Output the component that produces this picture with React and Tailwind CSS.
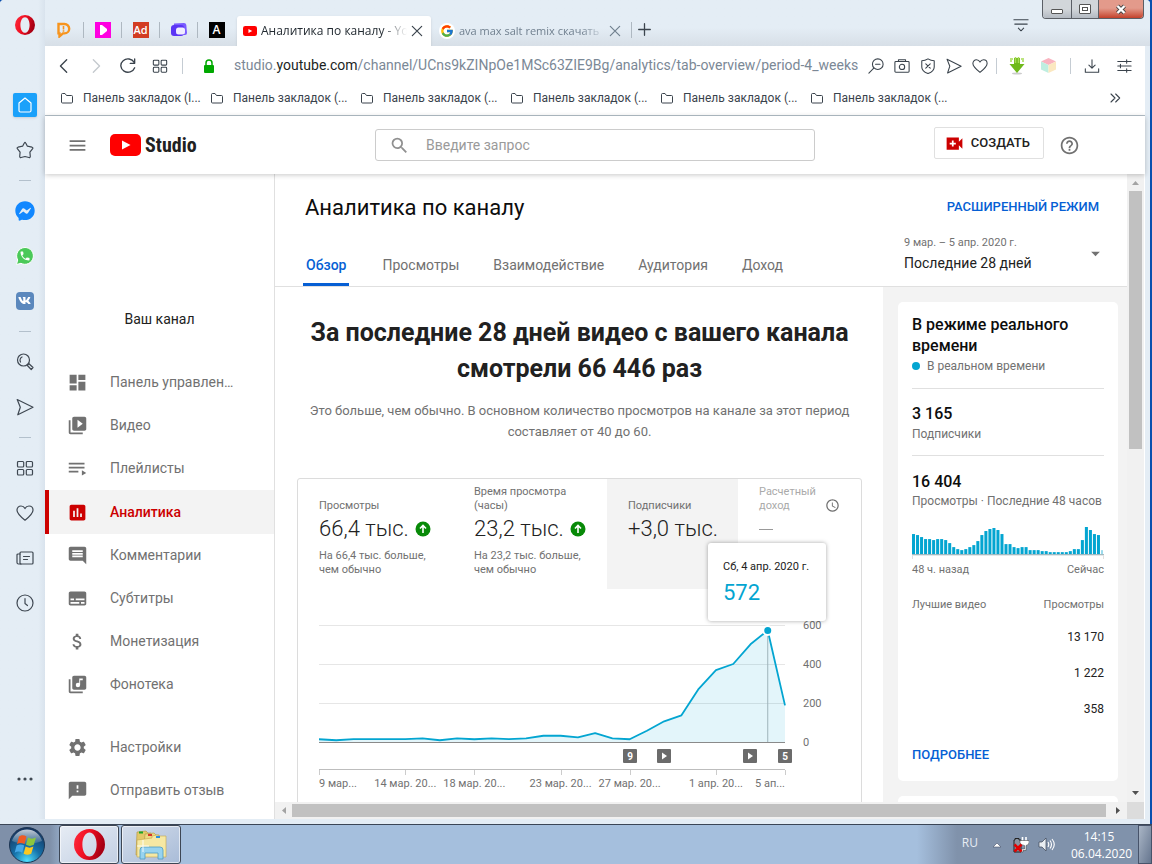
import React, { useState } from 'react';
import {
  MdAccessTime, MdArrowDropDown, MdAttachMoney, MdComment, MdDashboard, MdFeedback, MdHelpOutline,
  MdLibraryMusic, MdMenu, MdPoll, MdSearch, MdSettings, MdSubtitles, MdVideoCall,
  MdVideoLibrary, MdPhone,
} from 'react-icons/md';
import { FaFacebookMessenger, FaVk } from 'react-icons/fa';
import { FcGoogle } from 'react-icons/fc';

const PINNED = ['d', 'play', 'ad', 'cards', 'a'];
const BOOKMARKS = ['(I...', '(...', '(...', '(...', '(...', '(...'];

const MENU = [
  { icon: MdDashboard, label: 'Панель управлен…' },
  { icon: MdVideoLibrary, label: 'Видео' },
  { icon: PlaylistIcon, label: 'Плейлисты' },
  { icon: MdPoll, label: 'Аналитика', active: true },
  { icon: MdComment, label: 'Комментарии' },
  { icon: MdSubtitles, label: 'Субтитры' },
  { icon: MdAttachMoney, label: 'Монетизация' },
  { icon: MdLibraryMusic, label: 'Фонотека' },
];

const MENU_BOTTOM = [
  { icon: MdSettings, label: 'Настройки' },
  { icon: MdFeedback, label: 'Отправить отзыв' },
];

const TABS = ['Обзор', 'Просмотры', 'Взаимодействие', 'Аудитория', 'Доход'];

const SUBSCRIBERS = [
  14, 9, 15, 15, 15, 15, 19, 9, 19, 14, 19, 15, 19, 32, 32, 24, 45, 19, 14, 58, 106, 137, 273, 369, 400, 501, 572, 188,
];

const DATE_TICKS = [
  { day: 0, label: '9 мар...', anchor: 'start' },
  { day: 5, label: '14 мар. 20...', anchor: 'middle' },
  { day: 9, label: '18 мар. 20...', anchor: 'middle' },
  { day: 14, label: '23 мар. 20...', anchor: 'middle' },
  { day: 18, label: '27 мар. 20...', anchor: 'middle' },
  { day: 23, label: '1 апр. 20...', anchor: 'middle' },
  { day: 27, label: '5 ап...', anchor: 'end' },
];

const MARKERS = [
  { day: 18, text: '9' },
  { day: 20 },
  { day: 25 },
  { day: 27, text: '5' },
];

const HOURLY = [
  20, 19, 17, 15, 15, 14, 15, 15, 14, 11, 7, 5, 4, 5, 7, 9, 13, 19, 23, 25, 26, 24, 20, 10,
  10, 7, 6, 7, 7, 4, 4, 4, 3, 3, 2, 2, 2, 2, 2, 3, 5, 5, 14, 27, 24, 20, 19, 4,
];

const TOP_VIEWS = ['13 170', '1 222', '358'];

/* ---------- icons ---------- */

function Stroke({ size = 18, children, className = '' }) {
  return (
    <svg width={size} height={size} viewBox="0 0 18 18" fill="none" stroke="currentColor" strokeWidth="1.2" strokeLinecap="round" strokeLinejoin="round" className={`shrink-0 ${className}`}>
      {children}
    </svg>
  );
}

function PlaylistIcon({ size, className }) {
  return (
    <svg width={size} height={size} viewBox="0 0 24 24" fill="currentColor" className={className}>
      <path d="M2 5.500h18v2H2zM2 10h18v2H2zM2 14.700h11v2H2zM17 14l5 3l-5 3z" />
    </svg>
  );
}

function OperaLogo({ size, id }) {
  return (
    <svg width={size} height={size} viewBox="0 0 20 20" className="shrink-0">
      <defs>
        <linearGradient id={id} x1="0" y1="0" x2="1" y2="0.3">
          <stop offset="0" stopColor="#ff2b3d" />
          <stop offset="0.5" stopColor="#f01022" />
          <stop offset="1" stopColor="#a70014" />
        </linearGradient>
      </defs>
      <path fill={`url(#${id})`} fillRule="evenodd" d="M10 0a10 10 0 1 0 0 20a10 10 0 0 0 0-20zM10 2.200c2.700 0 4.600 3.400 4.600 7.800s-1.900 7.800-4.600 7.800s-4.600-3.400-4.600-7.800s1.900-7.800 4.600-7.800z" />
    </svg>
  );
}

function YouTubeMark({ width, height }) {
  return (
    <svg width={width} height={height} viewBox="0 0 31 22" className="shrink-0">
      <rect width="31" height="22" rx="5" fill="#f00" />
      <path d="M12 6.500v9l8.500-4.500z" fill="#fff" />
    </svg>
  );
}

function Grid({ size }) {
  return (
    <Stroke size={size}>
      <rect x="1.500" y="2.500" width="6.200" height="5.500" rx="1" />
      <rect x="10.300" y="2.500" width="6.200" height="5.500" rx="1" />
      <rect x="1.500" y="10.500" width="6.200" height="5.500" rx="1" />
      <rect x="10.300" y="10.500" width="6.200" height="5.500" rx="1" />
    </Stroke>
  );
}

function Heart({ size }) {
  return (
    <Stroke size={size}>
      <path d="M9 16.200C5 13 1 9.800 1 6.200C1 3.700 2.800 2 5 2c1.700 0 3.200 1 4 2.600C9.800 3 11.300 2 13 2c2.200 0 4 1.700 4 4.200c0 3.600-4 6.800-8 10z" />
    </Stroke>
  );
}

function Plane({ size }) {
  return (
    <Stroke size={size}>
      <path d="M1.200 1.500L17 9.200L1.800 16.800L4.300 9.200z" />
    </Stroke>
  );
}

function PinnedIcon({ kind }) {
  switch (kind) {
    case 'd':
      return (
        <svg width="16" height="16" viewBox="0 0 16 16" className="shrink-0">
          <path d="M2.500 2h6a4.700 4.700 0 0 1 0 9.400H7l-3.500 3v-3H2.500z" fill="none" stroke="#f7941d" strokeWidth="2.400" />
          <path d="M7.500 4v3.500M7.500 8.300v1.500" stroke="#f7941d" strokeWidth="1.600" />
        </svg>
      );
    case 'play':
      return (
        <svg width="16" height="16" viewBox="0 0 16 16">
          <rect width="16" height="16" fill="#ff00e1" />
          <path d="M5 3h2l5 4v2l-5 4H5z" fill="#fff" />
        </svg>
      );
    case 'ad':
      return <span className="w-4 h-4 bg-[#d23c22] text-white text-[11px] leading-4 font-semibold text-center">Ad</span>;
    case 'cards':
      return (
        <svg width="16" height="16" viewBox="0 0 16 16">
          <path d="M3 1.500l10-.5q2 0 2.300 2l.7 8q0 2-2 2H2z" fill="#7a5cff" />
          <rect x="0" y="3" width="13" height="11" rx="3" fill="#5b35f5" />
          <rect x="5" y="5.500" width="9" height="7" rx="2.500" fill="#f0ecff" />
        </svg>
      );
    default:
      return <span className="w-4 h-4 bg-black text-white text-[12px] leading-4 font-semibold text-center">A</span>;
  }
}

/* ---------- browser chrome ---------- */

function Rail() {
  const cell = 'h-[45px] w-full flex items-center justify-center shrink-0';
  const line = <div className="h-4 flex items-center shrink-0"><div className="w-3 h-px bg-[#b3c0cc]" /></div>;
  return (
    <aside className="w-[45px] shrink-0 bg-gradient-to-r from-[#e4edf5] from-85% to-[#d9e3ed] flex flex-col items-center text-[#3f4852] pb-[18px]">
      <div className="h-[82px] w-full pr-1 pt-[15px] flex justify-center shrink-0 pl-2">
        <button type="button" aria-label="Opera" className="h-5"><OperaLogo size={20} id="opera-rail" /></button>
      </div>
      <div className="flex flex-col items-center w-full pl-1 flex-1">
        <button type="button" aria-label="Экспресс-панель" className={cell}>
          <span className="w-6 h-6 bg-[#1ba1fa] rounded-[2px] shadow-sm flex items-center justify-center text-white">
            <Stroke size={18}><path d="M9 2L15 7v7.500a1.500 1.500 0 0 1-1.500 1.500h-9A1.500 1.500 0 0 1 3 14.500V7z" /></Stroke>
          </span>
        </button>
        <button type="button" aria-label="Закладки" className={cell}>
          <Stroke size={18}><path d="M8.300 2q.7-1.400 1.400 0l1.700 3.200l4.600 1q1.500.5.500 1.600l-2.600 3.300l.4 4.400q-.2 1.300-1.400 1L9 15.500l-3.900 1q-1.200.3-1.400-1l.4-4.400L1.500 7.800q-1-1.100.5-1.600l4.600-1z" /></Stroke>
        </button>
        {line}
        <button type="button" aria-label="Messenger" className={cell}><FaFacebookMessenger size={20} className="text-[#1288ff]" /></button>
        <button type="button" aria-label="WhatsApp" className={cell}>
          <svg width="18" height="18" viewBox="0 0 18 18">
            <path d="M9 .5a8.400 8.400 0 1 1-4 15.800L.5 17.500L1.700 13A8.400 8.400 0 0 1 9 .5z" fill="#4ac959" stroke="#fff" />
            <MdPhone x="3" y="3" size={12} color="#fff" />
          </svg>
        </button>
        <button type="button" aria-label="ВКонтакте" className={cell}>
          <span className="w-[18px] h-[18px] rounded bg-[#5b88bd] flex items-center justify-center"><FaVk size={13} className="text-white" /></span>
        </button>
        {line}
        <button type="button" aria-label="Поиск" className={cell}>
          <Stroke size={18}>
            <circle cx="7.500" cy="7" r="6" />
            <path d="M12 11.500l1-.8l4 3.800l-1.800 2l-3.800-4zM4.500 9A3.600 3.600 0 0 1 6 4" />
          </Stroke>
        </button>
        <button type="button" aria-label="Моя лента" className={cell}><Plane size={18} /></button>
        {line}
        <button type="button" aria-label="Вкладки" className={cell}><Grid size={18} /></button>
        <button type="button" aria-label="Избранное" className={cell}><Heart size={18} /></button>
        <button type="button" aria-label="Новости" className={cell}>
          <Stroke size={18}>
            <rect x="4" y="3" width="13" height="12" rx="1" />
            <path d="M4 5H2a1 1 0 0 0-1 1v7.500A1.500 1.500 0 0 0 2.500 15H5M7.500 7.500h6M7.500 10.500h4" />
          </Stroke>
        </button>
        <button type="button" aria-label="История" className={cell}>
          <Stroke size={18}><circle cx="9" cy="9" r="8" /><path d="M9 4.500V9.500l2.500 2" /></Stroke>
        </button>
        <button type="button" aria-label="Ещё" className={`${cell} mt-auto`}>
          <svg width="16" height="4" viewBox="0 0 16 4" fill="currentColor"><circle cx="2" cy="2" r="1.600" /><circle cx="8" cy="2" r="1.600" /><circle cx="14" cy="2" r="1.600" /></svg>
        </button>
      </div>
    </aside>
  );
}

function Cross({ className }) {
  return <Stroke size={12} className={className}><path d="M2 2l14 14M16 2L2 16" strokeWidth="1.800" /></Stroke>;
}

function TabStrip() {
  return (
    <div className="h-[46px] shrink-0 bg-gradient-to-b from-[#e4edf5] from-60% to-[#d7dfe7] flex items-start text-[12px] text-[#3b444d]">
      <div className="flex items-center h-[30px] mt-[15px] ml-[10px]">
        {PINNED.map((kind, i) => (
          <React.Fragment key={kind}>
            {i > 0 && <span className="w-px h-4 bg-[#aeb8c1]" />}
            <button type="button" aria-label={kind} className={`flex justify-center ${i === 0 ? 'w-7 pr-2.5' : 'w-[37px]'}`}><PinnedIcon kind={kind} /></button>
          </React.Fragment>
        ))}
      </div>
      <div className="w-[194px] h-[30px] mt-4 ml-[2px] bg-white rounded-t-[3px] shadow-sm flex items-center pl-1.5 pr-2 gap-1">
        <YouTubeMark width={14} height={10} />
        <span className="flex-1 min-w-0 whitespace-nowrap text-[#222a31] [mask-image:linear-gradient(to_right,#000_82%,transparent)]">Аналитика по каналу - Yo</span>
        <button type="button" aria-label="Закрыть вкладку"><Cross /></button>
      </div>
      <div className="w-[200px] h-[30px] mt-4 flex items-center pl-2 pr-2.5 gap-1 text-[#71808f]">
        <span className="w-4 h-4 rounded-full bg-white flex items-center justify-center shrink-0"><FcGoogle size={14} /></span>
        <span className="flex-1 min-w-0 whitespace-nowrap text-[11px] [mask-image:linear-gradient(to_right,#000_84%,transparent)]">ava max salt remix скачать</span>
        <button type="button" aria-label="Закрыть вкладку"><Cross /></button>
      </div>
      <span className="w-px h-4 bg-[#aeb8c1] mt-[22px]" />
      <button type="button" aria-label="Новая вкладка" className="mt-[23px] ml-1.5">
        <Stroke size={13}><path d="M9 1v16M1 9h16" strokeWidth="1.800" /></Stroke>
      </button>
      <button type="button" aria-label="Меню вкладок" className="ml-auto mt-[17px] mr-[13px]">
        <Stroke size={16}><path d="M1 3h16M2 8h14M6 12.500l3 3l3-3" /></Stroke>
      </button>
      <div className="flex h-[19px] mr-1.5 border border-t-0 border-[#5b5f66] rounded-b-[4px] overflow-hidden">
        <button type="button" aria-label="Свернуть" className="w-7 bg-gradient-to-b from-[#d2d6da] from-50% to-[#b4bac2] flex items-center justify-center pt-1">
          <span className="w-3 h-[5px] border border-[#555] bg-white rounded-[1px]" />
        </button>
        <button type="button" aria-label="Развернуть" className="w-[27px] border-l border-[#5b5f66] bg-gradient-to-b from-[#d2d6da] from-50% to-[#b4bac2] flex items-center justify-center">
          <span className="w-3 h-[10px] border border-[#555] bg-white rounded-[1px] flex items-center justify-center"><span className="w-1.5 h-1 border border-[#555]" /></span>
        </button>
        <button type="button" aria-label="Закрыть" className="w-[45px] border-l border-[#5b5f66] bg-gradient-to-b from-[#e39a8b] from-45% to-[#c3402a] flex items-center justify-center">
          <svg width="12" height="11" viewBox="0 0 12 11"><path d="M2.500 2l7 7M9.500 2l-7 7" stroke="#444" strokeWidth="4" /><path d="M2.500 2l7 7M9.500 2l-7 7" stroke="#fff" strokeWidth="2.400" /></svg>
        </button>
      </div>
    </div>
  );
}

function AddressBar() {
  const rule = <span className="w-px h-4 bg-[#c5ccd3]" />;
  return (
    <div className="h-[39px] shrink-0 bg-white flex items-center text-[#3a434c] pl-[11px] pr-[13px]">
      <button type="button" aria-label="Назад" className="w-4 mr-4"><Stroke size={16}><path d="M12 2L5 9l7 7" strokeWidth="1.500" /></Stroke></button>
      <button type="button" aria-label="Вперёд" className="w-4 mr-4 text-[#c4c9ce]"><Stroke size={16}><path d="M6 2l7 7l-7 7" strokeWidth="1.500" /></Stroke></button>
      <button type="button" aria-label="Обновить" className="w-4 mr-4"><Stroke size={16}><path d="M16 5A8 7.500 0 1 0 16.500 11M16.500 1v5h-5" strokeWidth="1.500" /></Stroke></button>
      <button type="button" aria-label="Экспресс-панель" className="w-4 mr-[14px]"><Grid size={16} /></button>
      {rule}
      <svg width="12" height="14" viewBox="0 0 12 14" className="ml-[20px] mr-[19px] shrink-0">
        <path d="M3 6V4a3 3 0 0 1 6 0v2" fill="none" stroke="#00a800" strokeWidth="1.500" />
        <rect x="1" y="6" width="10" height="8" rx="1" fill="#00a800" />
      </svg>
      <div className="flex-1 min-w-0 whitespace-nowrap font-[Roboto,sans-serif] text-[14px] text-[#7b8896]">
        studio.<span className="text-[#1b1f23]">youtube.com</span>/channel/UCns9kZINpOe1MSc63ZIE9Bg/analytics/tab-overview/period-4_weeks
      </div>
      <div className="flex items-center gap-2.5 ml-2">
        <button type="button" aria-label="Масштаб"><Stroke size={16}><circle cx="11" cy="7" r="6" /><path d="M6.500 11.500L1 17M8.500 7h5" /></Stroke></button>
        <button type="button" aria-label="Снимок"><Stroke size={16}><rect x="1" y="4" width="16" height="12" rx="1" /><path d="M5 4V2h8v2" /><circle cx="9" cy="10" r="3" /></Stroke></button>
        <button type="button" aria-label="Блокировка рекламы"><Stroke size={16}><path d="M9 1c2.500 1.500 5 2 7 2v7c0 3.500-3 6-7 7.500C5 16 2 13.500 2 10V3c2 0 4.500-.5 7-2zM6.500 6.500l5 5M11.500 6.500l-5 5" /></Stroke></button>
        <button type="button" aria-label="Отправить"><Plane size={16} /></button>
        <button type="button" aria-label="Избранное"><Heart size={16} /></button>
      </div>
      <div className="flex items-center ml-2">
        {rule}
        <button type="button" aria-label="Загрузчик" className="ml-3 mr-4">
          <svg width="16" height="18" viewBox="0 0 16 18">
            <ellipse cx="8" cy="16.500" rx="5" ry="1" fill="#ccc" />
            <path d="M5 1h6v6h4.500L8 16L.5 7H5z" fill="#6fb91b" />
            <path d="M1 2h3M12 2h3M1 4h2M13 4h2M6.500 0v6M9.500 0v6" stroke="#a7dc56" strokeWidth="1.500" />
          </svg>
        </button>
        <button type="button" aria-label="Расширение">
          <svg width="15" height="15" viewBox="0 0 15 15"><path d="M7.500 0L15 3.500L7.500 7L0 3.500z" fill="#f9b4c0" /><path d="M0 3.500L7.500 7v8L0 11.500z" fill="#bfeee0" /><path d="M15 3.500L7.500 7v8l7.500-3.500z" fill="#fbe8c0" /></svg>
        </button>
        <span className="w-px h-4 bg-[#c5ccd3] ml-[14px] mr-[13px]" />
        <button type="button" aria-label="Загрузки" className="mr-4"><Stroke size={16}><path d="M9 2v9M5.500 8L9 11.500L12.500 8M1.500 12v4h15v-4" /></Stroke></button>
        <button type="button" aria-label="Настройки"><Stroke size={16}><path d="M2 4h15M2 9h15M2 14h15M12 2v4M5 7v4M12 12v4" /></Stroke></button>
      </div>
    </div>
  );
}

function BookmarkBar() {
  return (
    <div className="h-[31px] shrink-0 bg-white border-b border-[#b4c0c9] flex items-center font-[Roboto,sans-serif] text-[12px] text-[#3a434c] pl-4 pr-[24px] pb-1">
      {BOOKMARKS.map((tail, i) => (
        <a key={i} href="#" className="w-[150px] flex items-center gap-[10px] whitespace-nowrap">
          <svg width="12" height="11" viewBox="0 0 12 11" fill="none" stroke="currentColor" className="shrink-0"><path d="M.5 1.500a1 1 0 0 1 1-1h2.500l1.500 2h5a1 1 0 0 1 1 1v5.500a1 1 0 0 1-1 1h-9a1 1 0 0 1-1-1z" /></svg>
          Панель закладок {tail}
        </a>
      ))}
      <button type="button" aria-label="Другие закладки" className="ml-auto"><Stroke size={12}><path d="M3 3l6 6l-6 6M10 3l6 6l-6 6" strokeWidth="1.600" /></Stroke></button>
    </div>
  );
}

/* ---------- studio page ---------- */

function StudioHeader() {
  return (
    <header className="h-[58px] shrink-0 bg-white flex items-center shadow-[0_1px_5px_rgba(0,0,0,0.22)] relative z-10">
      <button type="button" aria-label="Меню" className="ml-[22px] text-[#717171]"><MdMenu size={21} /></button>
      <a href="#" className="ml-[22px] flex items-center gap-1 w-[265px]">
        <YouTubeMark width={31} height={22} />
        <span className="font-['Roboto_Condensed','Liberation_Sans_Narrow',Roboto,sans-serif] font-bold text-[20px] leading-6 text-[#212121]">Studio</span>
      </a>
      <label className="flex-1 max-w-[440px] h-8 border border-[#ccc] rounded-[3px] flex items-center">
        <MdSearch size={21} className="ml-[13px] mr-4 text-[#909090] shrink-0" />
        <input type="text" aria-label="Поиск" placeholder="Введите запрос" className="flex-1 min-w-0 text-[14px] outline-none placeholder:text-[#9a9a9a]" />
      </label>
      <button type="button" className="ml-auto h-8 mb-1 border border-[#e0e0e0] rounded-[2px] flex items-center gap-1.5 pl-[9px] pr-[13px] text-[13px] font-medium text-[#212121]">
        <svg width="21" height="21" viewBox="0 0 24 24"><path d="M3 5h14v5l4-4v12l-4-4v5H3z" fill="#c00" /><path d="M10 8.500v7M6.500 12h7" stroke="#fff" strokeWidth="2" /></svg>
        СОЗДАТЬ
      </button>
      <button type="button" aria-label="Справка" className="ml-[15px] mr-[65px] text-[#717171]"><MdHelpOutline size={21} /></button>
    </header>
  );
}

function MenuItem({ icon: Icon, label, active }) {
  return (
    <a
      href="#"
      className={`flex items-center text-[14px] ${
        active ? 'h-11 bg-[#f3f3f3] text-[#c00] border-l-4 border-[#c00] pl-[18px] font-medium' : 'h-[43px] text-[#717171] pl-[22px]'
      }`}
    >
      <Icon size={21} className="shrink-0" />
      <span className="ml-[22px] whitespace-nowrap">{label}</span>
    </a>
  );
}

function StudioSidebar() {
  return (
    <nav className="w-[230px] shrink-0 bg-white border-r border-[#e0e0e0]">
      <div className="h-[187px] flex flex-col justify-end items-center pb-8">
        <p className="text-[14px] leading-5 text-[#212121]">Ваш канал</p>
      </div>
      {MENU.map((item) => <MenuItem key={item.label} {...item} />)}
      <div className="h-5" />
      {MENU_BOTTOM.map((item) => <MenuItem key={item.label} {...item} />)}
    </nav>
  );
}

function PageTop({ tab, setTab }) {
  return (
    <div className="h-[113px] shrink-0 bg-white border-b border-[#e0e0e0] flex justify-between pl-7 pr-7">
      <div className="flex flex-col justify-between">
        <h1 className="mt-[19px] ml-[2px] text-[22px] leading-[30px] text-[#0d0d0d]">Аналитика по каналу</h1>
        <div className="flex gap-[31px]" role="tablist">
          {TABS.map((name) => (
            <button
              key={name}
              type="button"
              role="tab"
              aria-selected={tab === name}
              onClick={() => setTab(name)}
              className={`h-10 pt-[2px] pl-[3px] text-[14px] border-b-[3px] ${
                tab === name ? 'text-[#065fd4] border-[#065fd4] font-medium pr-[2px]' : 'text-[#717171] border-transparent'
              }`}
            >
              {name}
            </button>
          ))}
        </div>
      </div>
      <div className="w-[195px] flex flex-col">
        <a href="#" className="mt-[23px] self-end whitespace-nowrap text-[13px] leading-5 font-medium text-[#065fd4]">РАСШИРЕННЫЙ РЕЖИМ</a>
        <button type="button" className="mt-4 flex items-center justify-between text-left">
          <span>
            <span className="block text-[11px] leading-5 text-[#717171]">9 мар. – 5 апр. 2020 г.</span>
            <span className="block text-[14px] leading-5 text-[#212121]">Последние 28 дней</span>
          </span>
          <MdArrowDropDown size={21} className="text-[#717171] -mr-[7px]" />
        </button>
      </div>
    </div>
  );
}

function Metric({ label, value, note, up, selected, estimated }) {
  return (
    <button type="button" className={`min-w-0 h-[110px] pl-[21px] pr-2 flex flex-col justify-start text-left ${selected ? 'bg-[#f3f3f3]' : ''}`}>
      <span className="flex items-end w-full pt-[6px]">
        <span className={`h-[28px] flex items-end text-[11px] leading-[14px] ${estimated ? 'text-[#aaa] w-[66px]' : 'text-[#717171] w-[100px]'}`}>{label}</span>
        {estimated && <MdAccessTime size={15} className="text-[#717171] shrink-0" />}
      </span>
      <span className={`h-8 flex items-center gap-[6px] text-[22px] leading-8 font-light whitespace-nowrap ${estimated ? 'text-[#aaa]' : 'text-[#212121]'}`}>
        {estimated ? <span className="w-[14px] h-px bg-[#999]" /> : value}
        {up && (
          <svg width="16" height="16" viewBox="0 0 16 16" className="shrink-0"><circle cx="8" cy="8" r="7.500" fill="#088a08" /><path d="M8 12V5M5 7.500L8 4.500l3 3" fill="none" stroke="#fff" strokeWidth="1.600" /></svg>
        )}
      </span>
      <span className="mt-1 w-[120px] text-[11px] leading-[14px] text-[#717171]">{note}</span>
    </button>
  );
}

// 466px plot, 39px for every 200 subscribers
const px = (day) => 21 + (day * 466) / 27;
const py = (value) => 153 - (value * 39) / 200;

function Chart() {
  const line = SUBSCRIBERS.map((v, i) => `${px(i)},${py(v)}`).join(' ');
  return (
    <svg viewBox="0 0 563 214" className="w-full h-auto block" role="img" aria-label="Подписчики">
      {[200, 400, 600].map((v) => <path key={v} d={`M21 ${py(v) + 0.5}H487`} stroke="#e6e6e6" />)}
      <polygon points={`21,153 ${line} 487,153`} fill="#00a5d1" fillOpacity="0.11" />
      <path d="M21 153.500H487" stroke="#8a8a8a" />
      <path d={`M${px(26)} 41V153`} stroke="#9fb3ba" />
      <polyline points={line} fill="none" stroke="#03a5d1" strokeWidth="1.800" strokeLinejoin="round" />
      <circle cx={px(26)} cy={py(572)} r="4.500" fill="#03a5d1" stroke="#fff" strokeWidth="2" />
      {[0, 200, 400, 600].map((v) => <text key={v} x="505" y={py(v) + 4} fontSize="11" fill="#717171">{v}</text>)}
      {MARKERS.map(({ day, text }) => (
        <g key={day} transform={`translate(${Math.round(px(day)) - 7} 160)`}>
          <rect width="14" height="14" rx="1" fill="#6b6b6b" />
          {text ? <text x="7" y="11" fontSize="10" fontWeight="700" fill="#fff" textAnchor="middle">{text}</text> : <path d="M5 3.500v7l5-3.500z" fill="#fff" />}
        </g>
      ))}
      <path d="M21 180.500H487" stroke="#bdbdbd" />
      {DATE_TICKS.map(({ day, label, anchor }) => (
        <g key={day}>
          <path d={`M${Math.round(px(day)) + 0.5} 181v5`} stroke="#ccc" />
          <text x={px(day)} y="198" fontSize="11" fill="#717171" textAnchor={anchor}>{label}</text>
        </g>
      ))}
    </svg>
  );
}

function Overview() {
  return (
    <main className="flex-1 min-w-0 bg-white pl-[22px] pr-[21px] pt-7">
      <h2 className="text-[25px] leading-9 font-bold text-[#212121] text-center">За последние 28 дней видео с вашего канала смотрели 66 446 раз</h2>
      <p className="mt-[13px] text-[13px] leading-[21px] text-[#717171] text-center">
        Это больше, чем обычно. В основном количество просмотров на канале за этот период составляет от 40 до 60.
      </p>
      <section className="relative mt-[36px] h-[360px] border border-[#dcdcdc] rounded-[3px]">
        <div className="grid grid-cols-[155fr_154fr_131fr_123fr]">
          <Metric label="Просмотры" value="66,4 тыс." up note="На 66,4 тыс. больше, чем обычно" />
          <Metric label="Время просмотра (часы)" value="23,2 тыс." up note="На 23,2 тыс. больше, чем обычно" />
          <Metric label="Подписчики" value="+3,0 тыс." selected />
          <Metric label="Расчетный доход" estimated />
        </div>
        <Chart />
        <div className="absolute right-[35px] top-[64px] w-[118px] h-[78px] bg-white rounded-[3px] shadow-[0_0_4px_rgba(0,0,0,0.35)] pl-[15px] pt-4">
          <p className="text-[11px] leading-4 text-[#212121]">Сб, 4 апр. 2020 г.</p>
          <p className="mt-1 text-[22px] leading-7 text-[#03a5d1]">572</p>
        </div>
      </section>
    </main>
  );
}

function Realtime() {
  return (
    <aside className="w-[244px] shrink-0 bg-[#f3f3f3] pl-[15px] pr-[9px] pt-[15px]">
      <section className="h-[479px] bg-white rounded-[5px] px-[14px] pt-3 text-[#717171] text-[12px]">
        <h3 className="text-[16px] leading-[21px] font-medium text-[#0d0d0d]">В режиме реального времени</h3>
        <p className="flex items-center gap-[7px] leading-5 h-5"><span className="w-2 h-2 rounded-full bg-[#03a5d1]" />В реальном времени</p>
        <div className="mt-3 border-t border-[#e0e0e0] pt-[15px] h-[67px]">
          <p className="text-[16px] leading-5 font-medium text-[#0d0d0d]">3 165</p>
          <p className="leading-5">Подписчики</p>
        </div>
        <div className="border-t border-[#e0e0e0] pt-4">
          <p className="text-[16px] leading-5 font-medium text-[#0d0d0d]">16 404</p>
          <p className="leading-[19px] whitespace-nowrap">Просмотры · Последние 48 часов</p>
        </div>
        <svg viewBox="0 0 191 34" className="mt-[14px] w-full h-auto block" role="img" aria-label="Просмотры за 48 часов">
          {HOURLY.map((h, i) => <rect key={i} x={i * 4} y={29 - h} width={i === 47 ? 2 : 3} height={h} fill="#03a5d1" fillOpacity={i === 47 ? 0.4 : 1} />)}
          <path d="M0 29.500H191" stroke="#8aa5ad" />
          <path d="M.5 30v4M190.500 30v4" stroke="#e0e0e0" />
        </svg>
        <div className="flex justify-between text-[11px] leading-5 mt-px"><span>48 ч. назад</span><span>Сейчас</span></div>
        <table className="w-full mt-[15px]">
          <thead>
            <tr className="text-[11px] leading-5">
              <th className="font-normal text-left">Лучшие видео</th>
              <th className="font-normal text-right">Просмотры</th>
            </tr>
          </thead>
          <tbody>
            {TOP_VIEWS.map((views, i) => (
              <tr key={views} className={i === 0 ? 'h-10' : 'h-9'}>
                <td />
                <td className={`text-right text-[#212121] ${i === 0 ? 'pt-1' : ''}`}>{views}</td>
              </tr>
            ))}
          </tbody>
        </table>
        <a href="#" className="inline-block mt-[18px] text-[13px] leading-5 font-medium text-[#065fd4]">ПОДРОБНЕЕ</a>
      </section>
      <section className="mt-[15px] h-10 bg-white rounded-[5px]" />
    </aside>
  );
}

function Arrow({ d, color }) {
  return <svg width="17" height="17" viewBox="0 0 17 17" className="shrink-0"><path d={d} fill={color} /></svg>;
}

function StudioBody() {
  const [tab, setTab] = useState('Обзор');
  return (
    <div className="flex-1 min-w-0 flex flex-col">
      <div className="flex-1 min-h-0 flex">
        <div className="flex-1 min-w-0 flex flex-col overflow-hidden">
          <PageTop tab={tab} setTab={setTab} />
          <div className="flex-1 min-h-0 flex overflow-hidden">
            <Overview />
            <Realtime />
          </div>
        </div>
        <div className="w-[17px] shrink-0 bg-[#f1f1f1] flex flex-col items-center">
          <Arrow d="M5 11l3.500-4l3.500 4z" color="#a3a3a3" />
          <div className="w-[13px] h-[258px] bg-[#c1c1c1]" />
          <div className="flex-1" />
          <Arrow d="M5 6l3.500 4l3.500-4z" color="#505050" />
        </div>
      </div>
      <div className="h-[17px] shrink-0 flex bg-[#f1f1f1] items-center">
        <Arrow d="M11 5l-4 3.500l4 3.500z" color="#a3a3a3" />
        <div className="flex-1 pr-1"><div className="h-[13px] bg-[#c1c1c1]" /></div>
        <Arrow d="M6 5l4 3.500l-4 3.500z" color="#505050" />
        <div className="w-[17px] h-[17px] bg-[#dcdcdc]" />
      </div>
    </div>
  );
}

/* ---------- taskbar ---------- */

function Taskbar() {
  const task = 'h-[39px] border border-[#3d4654] rounded-[3px] flex items-center justify-center shadow-[inset_0_0_0_1px_rgba(255,255,255,0.6)]';
  return (
    <footer className="h-10 shrink-0 border-t border-[#3b4656] bg-[linear-gradient(to_right,#7f90a9_0,#7f90a9_50px,#a5bfdd_70px,#a5bfdd_calc(100%-235px),#8092ab_calc(100%-195px),#8092ab)] flex items-center text-white text-[12px]">
      <button type="button" aria-label="Пуск" className="ml-[9px]">
        <svg width="36" height="36" viewBox="0 0 36 36">
          <defs>
            <radialGradient id="orb" cx="0.5" cy="0.95" r="0.9">
              <stop offset="0" stopColor="#4fe0ff" />
              <stop offset="0.45" stopColor="#1570a8" />
              <stop offset="1" stopColor="#16355f" />
            </radialGradient>
            <linearGradient id="gloss" x1="0" y1="0" x2="0" y2="1">
              <stop offset="0" stopColor="#fff" stopOpacity="0.75" />
              <stop offset="1" stopColor="#fff" stopOpacity="0.1" />
            </linearGradient>
          </defs>
          <circle cx="18" cy="18" r="17.500" fill="url(#orb)" stroke="#1d3552" />
          <path d="M3 14A15.500 15.500 0 0 1 33 14C24 18 12 18 3 14z" fill="url(#gloss)" />
          <path d="M10 9.500c3-1.800 5-1.500 7.500 0l-2 7.500c-2.500-1.500-5-1.500-7.500 0z" fill="#ee5a24" />
          <path d="M19 10.500c3 1.600 5 1.500 8 0l-2.200 7.300c-2.800 1.500-5 1.500-7.800 0z" fill="#8cc63e" />
          <path d="M7.600 18.500c2.800-1.500 5-1.500 7.600 0l-2 7.200c-2.500-1.500-5-1.500-7.500 0z" fill="#45a8e8" />
          <path d="M16.600 19.500c2.800 1.500 5 1.500 7.800 0l-2.200 7.200c-2.800 1.600-5 1.500-7.600 0z" fill="#fbc822" />
        </svg>
      </button>
      <button type="button" aria-label="Opera" className={`${task} ml-[14px] w-[60px] bg-gradient-to-br from-[#e6ecf4] to-[#c2cfe3]`}><OperaLogo size={31} id="opera-task" /></button>
      <button type="button" aria-label="Проводник" className={`${task} ml-[2px] w-[60px] bg-gradient-to-br from-[#d3dcea] to-[#a9bcd8]`}>
        <svg width="34" height="30" viewBox="0 0 34 30">
          <path d="M3 2l9-1l2 2h3v22H2z" fill="#e2c869" stroke="#b2943c" strokeWidth=".6" />
          <path d="M11 4l9-1l2 2h3v20H9z" fill="#ecd983" stroke="#b2943c" strokeWidth=".6" />
          <path d="M18 6l5-1l2 1h7v21H3V10l15-2z" fill="#f6e8a3" stroke="#c2a64d" strokeWidth=".6" />
          <path d="M5 1.500h4v2H5z" fill="#19a526" /><path d="M14 4h4v2h-4z" fill="#d8342a" /><path d="M22 6h4v2h-4z" fill="#2a8fe0" />
          <path d="M6 29v-9q0-3 3-3h17q3 0 3 3v9h-5v-6H11v6z" fill="#97d3ef" stroke="#4b9cc4" strokeWidth=".8" />
          <path d="M9 10v12M3 16h12" stroke="#fff" strokeWidth="1" opacity=".9" />
        </svg>
      </button>
      <div className="ml-auto flex items-center h-full">
        <span className="text-[#e8edf4] mb-1">RU</span>
        <svg width="10" height="6" viewBox="0 0 10 6" className="ml-[14px]"><path d="M1 5l4-4l4 4z" fill="#fff" stroke="#44516a" strokeWidth=".6" /></svg>
        <svg width="16" height="17" viewBox="0 0 16 17" className="ml-[11px]">
          <path d="M2 2.500h4v1.500h2v12H1V4h1z" fill="#8a93a0" stroke="#222" />
          <path d="M9.500 1v4M13 1v4" stroke="#fff" strokeWidth="1.600" />
          <path d="M7 4.500h9v2q0 2.500-3 3v5h-3v1.500H8.500v-3h3V9.500Q7 9 7 6.500z" fill="#fff" stroke="#333" strokeWidth=".5" />
          <path d="M1.500 8.500l7 7M8.500 8.500l-7 7" stroke="#e10000" strokeWidth="2.600" />
        </svg>
        <svg width="17" height="15" viewBox="0 0 17 15" className="ml-[9px]" fill="none" stroke="#fff">
          <path d="M1 5h3l4-4v13l-4-4H1z" fill="#e8edf2" stroke="#3c4658" strokeWidth=".7" />
          <path d="M10 5q1.500 2.500 0 5M12 3.500q3 4 0 8M14 2q4.500 5.500 0 11" strokeWidth="1.100" />
        </svg>
        <time className="ml-4 w-[56px] text-center leading-[17px]">14:15<br />06.04.2020</time>
        <button type="button" aria-label="Свернуть все окна" className="ml-[11px] w-[14px] h-full border border-[#47536a] bg-gradient-to-br from-[#aab6c6] to-[#66768f]" />
      </div>
    </footer>
  );
}

export default function App() {
  return (
    <div className="h-screen min-h-[600px] flex flex-col overflow-hidden bg-[#0a4fae] font-['Open_Sans','Noto_Sans',sans-serif]">
      <div className="flex-1 min-h-0 flex bg-[#e4edf5] mr-[2px] pb-[5px] rounded-t-[4px] overflow-hidden">
        <Rail />
        <div className="flex-1 min-w-0 flex flex-col">
          <TabStrip />
          <div className="flex-1 min-h-0 flex flex-col mr-[5px]">
            <AddressBar />
            <BookmarkBar />
            <div className="flex-1 min-h-0 flex flex-col font-[Roboto,sans-serif]">
              <StudioHeader />
              <div className="flex-1 min-h-0 flex bg-white pr-px">
                <StudioSidebar />
                <StudioBody />
              </div>
            </div>
          </div>
        </div>
      </div>
      <Taskbar />
    </div>
  );
}
